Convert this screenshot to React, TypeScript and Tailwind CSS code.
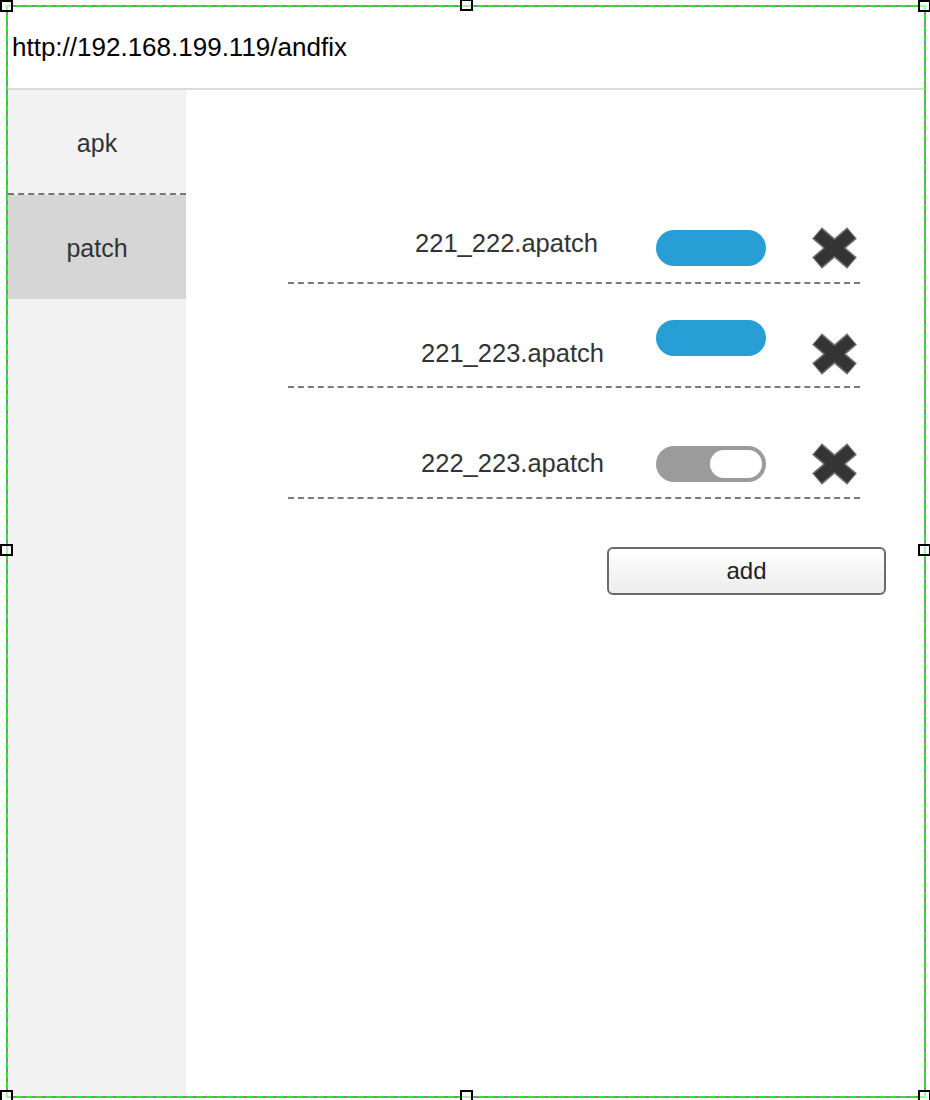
import React from 'react';

const font = { fontFamily: '"Liberation Sans", Arial, sans-serif' };

type Patch = {
    name: string;
    on: boolean;
    rowH: string;
    textMt: string;
    textPr: string;
    toggleMt: string;
    closeMt: string;
};

const patches: Patch[] = [
    { name: '221_222.apatch', on: true, rowH: 'h-[57px]', textMt: 'mt-[3px]', textPr: 'pr-[6px]', toggleMt: 'mt-[3px]', closeMt: 'mt-0' },
    { name: '221_223.apatch', on: true, rowH: 'h-[104px]', textMt: 'mt-[56px]', textPr: 'pr-0', toggleMt: 'mt-[36px]', closeMt: 'mt-[49px]' },
    { name: '222_223.apatch', on: false, rowH: 'h-[111px]', textMt: 'mt-[62px]', textPr: 'pr-0', toggleMt: 'mt-[58px]', closeMt: 'mt-[55px]' },
];

function CloseIcon() {
    return (
        <svg width="49" height="42" viewBox="0 0 49 42">
            <g strokeLinecap="butt">
                <line x1="7" y1="6" x2="42" y2="36" stroke="#707070" strokeWidth="15" />
                <line x1="42" y1="6" x2="7" y2="36" stroke="#707070" strokeWidth="15" />
                <line x1="7.8" y1="6.7" x2="41.2" y2="35.3" stroke="#343434" strokeWidth="12" />
                <line x1="41.2" y1="6.7" x2="7.8" y2="35.3" stroke="#343434" strokeWidth="12" />
            </g>
        </svg>
    );
}

function Toggle({ on }: { on: boolean }) {
    if (on) {
        return <div className="w-[110px] h-[36px] rounded-full bg-[#279fd6]" />;
    }
    return (
        <div className="w-[110px] h-[36px] rounded-full bg-[#9b9b9b] flex items-center justify-end pr-[4px]">
            <div className="w-[52px] h-[28px] rounded-full bg-white" />
        </div>
    );
}

function Handle({ pos }: { pos: string }) {
    return <div className={`absolute w-[13px] h-[12px] border-2 border-black bg-white/60 ${pos}`} />;
}

export default function App() {
    return (
        <div className="relative w-[930px] h-[1100px] bg-white pl-[6px] pt-[5px]" style={font}>
            {/* Selection frame */}
            <div className="w-[920px] h-[1093px] border-2 border-dashed border-[#22ee22] bg-[#8a8a8a] flex flex-col">
                {/* Address bar */}
                <div className="h-[83px] shrink-0 bg-white border-b-2 border-[#dcdcdc] flex items-center pl-[4px] text-[26px] text-black">
                    http://192.168.199.119/andfix
                </div>

                <div className="flex-1 flex">
                    {/* Sidebar */}
                    <div className="w-[178px] bg-[#f2f2f2] flex flex-col text-[25px] text-[#333]">
                        <div className="h-[105px] pt-[4px] flex items-center justify-center border-b-2 border-dashed border-[#777]">
                            apk
                        </div>
                        <div className="h-[104px] pt-[4px] bg-[#d6d6d6] flex items-center justify-center">
                            patch
                        </div>
                    </div>

                    {/* Patch list */}
                    <div className="flex-1 bg-white pl-[102px] pt-[137px]">
                        <div className="w-[572px] flex flex-col">
                            {patches.map(p => (
                                <div key={p.name} className={`${p.rowH} flex items-start border-b-2 border-dashed border-[#7a7a7a]`}>
                                    <div className={`w-[316px] text-right text-[25.5px] leading-[26px] text-[#333] ${p.textMt} ${p.textPr}`}>
                                        {p.name}
                                    </div>
                                    <div className={`ml-[52px] ${p.toggleMt}`}>
                                        <Toggle on={p.on} />
                                    </div>
                                    <div className={`ml-[44px] ${p.closeMt}`}>
                                        <CloseIcon />
                                    </div>
                                </div>
                            ))}
                        </div>

                        <button className="mt-[48px] ml-[319px] w-[279px] h-[48px] rounded-[6px] border-2 border-[#6a6a6a] bg-gradient-to-b from-white to-[#ececec] text-[24px] text-[#222]">
                            add
                        </button>
                    </div>
                </div>
            </div>

            {/* Resize handles */}
            <Handle pos="left-0 top-0" />
            <Handle pos="left-[460px] top-[-1px]" />
            <Handle pos="left-[918px] top-0" />
            <Handle pos="left-0 top-[544px]" />
            <Handle pos="left-[918px] top-[544px]" />
            <Handle pos="left-0 top-[1090px]" />
            <Handle pos="left-[460px] top-[1090px]" />
            <Handle pos="left-[918px] top-[1090px]" />
        </div>
    );
}
